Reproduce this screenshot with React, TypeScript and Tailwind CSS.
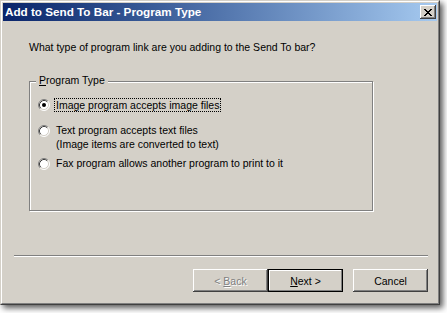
import React from 'react';

const bevel =
  'shadow-[inset_-1px_-1px_0_#404040,inset_1px_1px_0_#ffffff,inset_-2px_-2px_0_#808080,inset_2px_2px_0_#d4d0c8]';

const Radio = ({ checked }: { checked?: boolean }) => (
  <svg width="12" height="12" viewBox="0 0 12 12" className="shrink-0 mt-[2px]">
    <circle cx="6" cy="6" r="5" fill="#ffffff" />
    <path d="M2.11 9.89 A5.5 5.5 0 0 1 9.89 2.11" fill="none" stroke="#808080" strokeWidth="1" />
    <path d="M9.89 2.11 A5.5 5.5 0 0 1 2.11 9.89" fill="none" stroke="#ffffff" strokeWidth="1" />
    <path d="M2.82 9.18 A4.5 4.5 0 0 1 9.18 2.82" fill="none" stroke="#404040" strokeWidth="1" />
    <path d="M9.18 2.82 A4.5 4.5 0 0 1 2.82 9.18" fill="none" stroke="#d4d0c8" strokeWidth="1" />
    {checked && <circle cx="6" cy="6" r="2" fill="#000000" />}
  </svg>
);

const CloseGlyph = () => (
  <svg width="8" height="7" viewBox="0 0 8 7" shapeRendering="crispEdges">
    {[
      [0, 0, 2], [6, 0, 2],
      [1, 1, 2], [5, 1, 2],
      [2, 2, 4],
      [3, 3, 2],
      [2, 4, 4],
      [1, 5, 2], [5, 5, 2],
      [0, 6, 2], [6, 6, 2],
    ].map(([x, y, w], i) => (
      <rect key={i} x={x} y={y} width={w} height="1" fill="#000" />
    ))}
  </svg>
);

export default function App() {
  return (
    <div className="w-[447px] h-[313px] bg-white overflow-hidden font-['Liberation_Sans',Arial,sans-serif] text-[10.5px] leading-[14px] text-black">
      {/* window frame */}
      <div className="w-[440px] h-[305px] border border-t-[#d4d0c8] border-l-[#d4d0c8] border-r-[#404040] border-b-[#404040] bg-[#d4d0c8] shadow-[3px_3px_6px_rgba(0,0,0,0.65)]">
        <div className="h-full border border-t-white border-l-white border-r-[#808080] border-b-[#808080] p-[1px] flex flex-col">
          {/* title bar */}
          <div className="h-[18px] shrink-0 flex items-center justify-between pl-[2px] pr-[1px] bg-gradient-to-r from-[#0a246a] to-[#a6caf0]">
            <span className="text-white font-bold text-[11.7px] leading-[14px]">Add to Send To Bar - Program Type</span>
            <button className={`w-[16px] h-[14px] bg-[#d4d0c8] flex items-center justify-center ${bevel}`}>
              <CloseGlyph />
            </button>
          </div>

          {/* body */}
          <div className="flex-1 flex flex-col">
            <p className="ml-[26px] mt-[19px]">What type of program link are you adding to the Send To bar?</p>

            <div className="relative ml-[26px] mt-[27px] w-[344px] h-[130px] border border-[#808080] shadow-[1px_1px_0_#ffffff,inset_1px_1px_0_#ffffff]">
              <span className="absolute left-[6px] top-[-9px] px-[3px] bg-[#d4d0c8]">
                <u>P</u>rogram Type
              </span>
              <div className="flex flex-col pl-[8px] pt-[15px]">
                <div className="flex items-start gap-[4px]">
                  <Radio checked />
                  <span className="border border-dotted border-black px-[1px] leading-[12px] mt-[1px]">
                    Image program accepts image files
                  </span>
                </div>
                <div className="flex items-start gap-[6px] mt-[11px]">
                  <Radio />
                  <span>
                    Text program accepts text files
                    <br />
                    (Image items are converted to text)
                  </span>
                </div>
                <div className="flex items-start gap-[6px] mt-[5px]">
                  <Radio />
                  <span>Fax program allows another program to print to it</span>
                </div>
              </div>
            </div>

            <div className="ml-[11px] mr-[9px] mt-[44px] h-[2px] border-t border-t-[#808080] border-b border-b-white" />

            <div className="flex justify-end mr-[9px] mt-[12px]">
              <button className={`w-[75px] h-[23px] bg-[#d4d0c8] text-[#808080] [text-shadow:1px_1px_0_#ffffff] ${bevel}`}>
                &lt; <u>B</u>ack
              </button>
              <button className="w-[75px] h-[23px] bg-[#d4d0c8] border border-black shadow-[inset_-1px_-1px_0_#808080,inset_1px_1px_0_#ffffff]">
                <u>N</u>ext &gt;
              </button>
              <button className={`w-[75px] h-[23px] ml-[10px] bg-[#d4d0c8] ${bevel}`}>Cancel</button>
            </div>
          </div>
        </div>
      </div>
    </div>
  );
}
